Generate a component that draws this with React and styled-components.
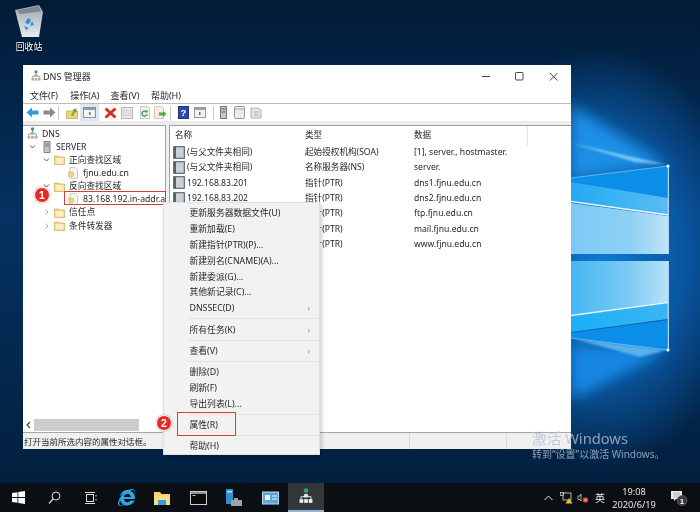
import React from "react";
import styled, { createGlobalStyle } from "styled-components";
import { FaInternetExplorer } from "react-icons/fa";

const Global = createGlobalStyle`
  html, body { margin: 0; padding: 0; width: 700px; height: 512px; overflow: hidden; background: #03203f; }
  * { box-sizing: border-box; }
`;

const Screen = styled.div`
  width: 700px; height: 512px; display: flex; flex-direction: column;
  font-family: "Noto Sans", "Noto Sans CJK SC", sans-serif; font-size: 8.8px; color: #262626;
  filter: blur(0.25px);
`;
const Desktop = styled.div`position: relative; height: 483px; overflow: hidden;`;
const Wall = styled.svg`position: absolute; inset: 0;`;

const DesktopIcon = styled.div`
  position: absolute; left: 8px; top: 5px; width: 42px; display: flex; flex-direction: column; align-items: center;
  gap: 4px; color: #fff; line-height: 12px; text-shadow: 0 1px 2px #000;
`;

const Win = styled.div`
  position: absolute; left: 23px; top: 65px; width: 548px; height: 384px; background: #fff;
  display: flex; flex-direction: column;
`;
const TitleBar = styled.div`display: flex; align-items: center; height: 22px; padding: 0 1px 0 8px; flex: none;`;
const TitleText = styled.div`flex: 1; margin-left: 2px; font-size: 9px;`;
const Ctl = styled.div`width: 34px; display: flex; justify-content: center; align-items: center;`;
const MenuBar = styled.div`display: flex; height: 16px; padding-left: 7px; align-items: center; flex: none;`;
const MenuItem = styled.div`width: 40.3px; font-size: 9px; white-space: nowrap;`;
const Rule = styled.div`height: 1px; background: #bdbdbd; flex: none;`;
const Toolbar = styled.div`display: flex; align-items: center; height: 17px; padding-left: 2px; flex: none;`;
const Tool = styled.div`
  width: ${p => p.$w || 15}px; margin-left: ${p => p.$ml || 0}px; height: 17px; display: flex; align-items: center; justify-content: center; flex: none;
  background: ${p => p.$on ? "#d9e9f5" : "transparent"};
`;
const ToolSep = styled.div`width: 1px; height: 14px; background: #c8c8c8; margin: 0 ${p => p.$m || 5}px; flex: none;`;
const Strip = styled.div`height: 4px; background: #ececec; flex: none;`;
const Panes = styled.div`flex: 1; display: flex; min-height: 0; background: #f0f0f0;`;
const TreePane = styled.div`
  width: 143px; flex: none; background: #fff; border-top: 1px solid #a0a0a0; border-right: 1px solid #a0a0a0;
  display: flex; flex-direction: column; overflow: hidden;
`;
const Tree = styled.div`flex: 1; min-height: 0; padding-top: 1px; display: grid; grid-auto-rows: 13.15px; align-content: start;`;
const TreeRow = styled.div`
  display: flex; align-items: center; white-space: nowrap; padding-left: ${p => p.$in}px; line-height: 12px; min-width: 0;
  svg { flex: none; }
`;
const Twist = styled.span`width: 9px; display: flex; justify-content: center; flex: none; margin-right: 3px;`;
const NodeLabel = styled.span`margin-left: 4px; font-size: 8.7px;`;
const HScroll = styled.div`height: 13px; display: flex; align-items: center; margin-bottom: 1px; flex: none; padding-left: 3px; gap: 3px;`;
const Thumb = styled.div`width: 105px; height: 12px; background: #cdcdcd;`;
const ListPane = styled.div`
  flex: 1; margin-left: 3px; background: #fff; border-top: 1px solid #a0a0a0; border-left: 1px solid #a0a0a0; padding-left: 3px; position: relative;
  font-size: 8.6px;
`;
const Grid = styled.div`display: grid; grid-template-columns: 132px 109px 1fr; grid-auto-rows: 15.3px; align-items: center; white-space: nowrap; line-height: 12px;`;
const Head = styled.div`height: 18.5px; display: grid; grid-template-columns: 130px 109px 1fr; align-items: center; padding-left: 2px; line-height: 12px;`;
const HeadEdge = styled.div`position: absolute; left: 357px; top: 0; width: 1px; height: 20px; background: #e6e6e6;`;
const NameCell = styled.div`display: flex; align-items: center; gap: 2px;`;
const Status = styled.div`
  height: 17px; flex: none; border-top: 1px solid #a6a6a6; background: #f0f0f0; display: grid; grid-template-columns: 387px 97px 1fr; align-items: center;
  font-size: 8.5px;
`;
const StatusCell = styled.div`height: 100%; display: flex; align-items: center; padding-left: 1px; border-right: 1px solid #dcdcdc; white-space: nowrap;`;

const Ctx = styled.div`
  position: absolute; left: 163px; top: 202px; width: 157px; height: 253px; background: #f2f2f2; padding: 2px 0 0 25.5px;
  border: 1px solid #e0e0e0; box-shadow: 2px 2px 4px rgba(0,0,0,.18); display: flex; flex-direction: column;
`;
const CtxItem = styled.div`
  height: 15.9px; display: flex; align-items: center; justify-content: space-between; padding-right: 9px; flex: none;
  white-space: nowrap; line-height: 12px;
`;
const CtxSep = styled.div`height: 1px; background: #e4e4e4; margin: 2.2px 0 2.2px -2px; flex: none;`;
const Chevron = styled.span`color: #8a8a8a; font-size: 8px; line-height: 1;`;

const RedBox = styled.div`position: absolute; border: 1.5px solid #d2403a; left: ${p => p.$x}px; top: ${p => p.$y}px; width: ${p => p.$w}px; height: ${p => p.$h}px;`;
const Badge = styled.div`
  position: absolute; left: ${p => p.$x - 8}px; top: ${p => p.$y - 8}px; width: 16px; height: 16px; border-radius: 50%;
  background: #e8291f; border: 1px solid #fff; color: #fff; font: bold 10.5px "Liberation Sans", sans-serif;
  display: flex; align-items: center; justify-content: center; box-shadow: 0 0 2px rgba(0,0,0,.4);
`;
const Watermark = styled.div`position: absolute; left: 532px; top: 428px; color: rgba(178,192,206,.78); white-space: nowrap;`;
const WmTitle = styled.div`font-size: 14.7px; line-height: 20px;`;
const WmSub = styled.div`font-size: 10px; line-height: 13px;`;

const Taskbar = styled.div`height: 29px; background: #0b0e13; display: flex; align-items: stretch; flex: none; color: #e8e8e8;`;
const TaskBtn = styled.div`
  width: 36px; display: flex; align-items: center; justify-content: center; flex: none;
  background: ${p => p.$on ? "#343638" : "transparent"};
  border-bottom: ${p => p.$on ? "2px solid #8fb8d8" : "0"};
`;
const Spacer = styled.div`flex: 1;`;
const Tray = styled.div`display: flex; align-items: center;`;
const TrayBtn = styled.div`width: ${p => p.$w}px; display: flex; justify-content: center; align-items: center; font-size: ${p => p.$fs || 10}px;`;
const Clock = styled.div`width: 50px; text-align: center; font-size: 9.2px; line-height: 13px; white-space: nowrap;`;

const Folder = ({ s = 11 }) => (
  <svg width={s} height={s} viewBox="0 0 11 11"><path d="M.5 2h4l1 1h5v7.5H.5z" fill="#f3d27e" stroke="#c8a550" strokeWidth=".6"/><rect x="1.5" y="4" width="8" height="5.6" fill="#fbeec2"/></svg>
);
const ZoneDoc = () => (
  <svg width="11" height="12" viewBox="0 0 11 12"><path d="M2 .5h5l2.500 2.500v8.500H2z" fill="#f6f6f2" stroke="#b8b8b0" strokeWidth=".7"/><rect x=".5" y="5" width="5" height="4.500" fill="#f0d585" stroke="#c8a550" strokeWidth=".4"/></svg>
);
const Rec = () => (
  <svg width="12" height="13" viewBox="0 0 12 13"><rect x=".7" y=".7" width="10.6" height="11.6" fill="#c9d1d6" stroke="#4b4f52" strokeWidth="1"/><path d="M1 1h2v11H1z" fill="#596066"/></svg>
);
const Tw = ({ d }) => (
  <Twist><svg width="7" height="6" viewBox="0 0 7 6">{d === "o" ? <path d="M1 1.500l2.500 2.500L6 1.500" fill="none" stroke="#555" strokeWidth="1"/> : <path d="M2.500 .5L5 3 2.500 5.500" fill="none" stroke="#aaa" strokeWidth="1"/>}</svg></Twist>
);
const DnsIcon = ({ s = 11, light }) => (
  <svg width={s} height={s * 1.15} viewBox="0 0 11 13">
    <circle cx="5.5" cy="2" r="1.8" fill="#2e9e8f"/>
    <rect x="5" y="3.5" width="1" height="3" fill="#777"/>
    <path d="M1.500 9V7h8v2" fill="none" stroke={light ? "#ddd" : "#888"} strokeWidth=".8"/>
    <rect x="3.8" y="5" width="3.4" height="2.6" fill={light ? "#e8e8e8" : "#a8a8a0"}/>
    <rect x=".3" y="9" width="3" height="3" fill={light ? "#f0f0f0" : "#b8b4a4"}/><rect x="4" y="9" width="3" height="3" fill={light ? "#f0f0f0" : "#b8b4a4"}/><rect x="7.7" y="9" width="3" height="3" fill={light ? "#f0f0f0" : "#b8b4a4"}/>
  </svg>
);

const tree = [
  { in: 4, icon: <DnsIcon />, t: "DNS" },
  { in: 5, tw: "o", icon: <svg width="12" height="12" viewBox="0 0 12 12"><rect x="4" y=".5" width="6" height="11" fill="#c4c4c4" stroke="#6e6e6e" strokeWidth=".8"/><path d="M5 3h4M5 5h4" stroke="#555" strokeWidth=".7"/></svg>, t: "SERVER" },
  { in: 19, tw: "o", icon: <Folder />, t: "正向查找区域" },
  { in: 45, icon: <ZoneDoc />, t: "fjnu.edu.cn" },
  { in: 19, tw: "o", icon: <Folder />, t: "反向查找区域" },
  { in: 45, icon: <ZoneDoc />, t: "83.168.192.in-addr.arpa" },
  { in: 19, tw: "c", icon: <Folder />, t: "信任点" },
  { in: 19, tw: "c", icon: <Folder />, t: "条件转发器" },
];

const rows = [
  ["(与父文件夹相同)", "起始授权机构(SOA)", "[1], server., hostmaster."],
  ["(与父文件夹相同)", "名称服务器(NS)", "server."],
  ["192.168.83.201", "指针(PTR)", "dns1.fjnu.edu.cn"],
  ["192.168.83.202", "指针(PTR)", "dns2.fjnu.edu.cn"],
  ["192.168.83.203", "指针(PTR)", "ftp.fjnu.edu.cn"],
  ["192.168.83.204", "指针(PTR)", "mail.fjnu.edu.cn"],
  ["192.168.83.205", "指针(PTR)", "www.fjnu.edu.cn"],
];

const Wallpaper = () => (
  <Wall width="700" height="483" viewBox="0 0 700 483">
    <defs>
      <linearGradient id="base" x1="0" x2="0" y1="0" y2="1"><stop offset="0" stopColor="#021b36"/><stop offset=".45" stopColor="#053262"/><stop offset="1" stopColor="#03203f"/></linearGradient>
      <radialGradient id="glow" gradientUnits="userSpaceOnUse" cx="600" cy="258" r="1" gradientTransform="translate(600 258) scale(150 210) translate(-600 -258)">
        <stop offset="0" stopColor="#0d78d2"/><stop offset=".55" stopColor="#0a57a2"/><stop offset="1" stopColor="#0a57a2" stopOpacity="0"/>
      </radialGradient>
      <linearGradient id="pale1" x1="0" x2="1" y1="0" y2="0"><stop offset="0" stopColor="#7cc9f4"/><stop offset=".6" stopColor="#8fd0f5"/><stop offset="1" stopColor="#bde3f8"/></linearGradient>
      <linearGradient id="pale2" x1="0" x2="1" y1="0" y2="0"><stop offset="0" stopColor="#45b6f2"/><stop offset=".6" stopColor="#7ccaf4"/><stop offset="1" stopColor="#b8e2f8"/></linearGradient>
      <linearGradient id="mid" x1="0" x2="1" y1="0" y2="0"><stop offset="0" stopColor="#22aaf2"/><stop offset="1" stopColor="#59bdf2"/></linearGradient>
      <linearGradient id="mid2" x1="0" x2="1" y1="0" y2="0"><stop offset="0" stopColor="#18b0f6"/><stop offset="1" stopColor="#3cb6f2"/></linearGradient>
      <filter id="b"><feGaussianBlur stdDeviation="7"/></filter>
      <filter id="b2"><feGaussianBlur stdDeviation="1.2"/></filter>
    </defs>
    <rect width="700" height="483" fill="url(#base)"/>
    <rect width="700" height="483" fill="url(#glow)"/>
    <path d="M571 105L668 165L571 178Z" fill="#1b8fe6" filter="url(#b)"/>
    <path d="M571 345L668 350L571 400Z" fill="#1488e4" filter="url(#b)"/>
    <path d="M571 143L668 165L635 162Z" fill="#9adcff" opacity=".75" filter="url(#b2)"/>
    <path d="M571 338L668 350L640 357Z" fill="#7fd0ff" opacity=".65" filter="url(#b2)"/>
    <path d="M571 178L668 166V199L571 182Z" fill="#0a8ee8"/>
    <path d="M571 182L668 198V215L571 201Z" fill="url(#mid)"/>
    <path d="M571 203L668 216V254H571Z" fill="url(#pale1)"/>
    <path d="M571 261H668V302L571 315Z" fill="url(#pale2)"/>
    <path d="M571 316L668 303V319L571 332Z" fill="url(#mid2)"/>
    <path d="M571 333L668 320V350L571 338Z" fill="#0a8ee8"/>
    <path d="M571 201.500L668 215M571 315.500L668 302.500" stroke="#eef9ff" strokeWidth="1.400"/>
    <path d="M571 178L668 166M571 338L668 350" stroke="#6cc6fa" strokeWidth=".8"/>
    <path d="M668.300 166V254M668.300 261V350" stroke="#d8f2ff" strokeWidth="1"/>
    <circle cx="668" cy="166" r="1.600" fill="#fff"/>
    <circle cx="668" cy="350" r="1.600" fill="#fff"/>
  </Wall>
);

export default function App() {
  return (
    <Screen>
      <Global />
      <Desktop>
        <Wallpaper />
        <DesktopIcon>
          <svg width="28" height="32" viewBox="0 0 28 32">
            <defs><linearGradient id="bin" x1="0" x2="0" y1="0" y2="1"><stop offset="0" stopColor="#9ea9af"/><stop offset="1" stopColor="#e6ecef"/></linearGradient></defs>
            <path d="M0 5L24 0l4 7-4 25H7z" fill="url(#bin)"/>
            <path d="M2 5.500L23.500 1.200 26 6.500 5 9z" fill="#7d888e"/>
            <path d="M10 18l3-5 3 2-2 4zm7-2l2 4-4 1zM9 21l5 2-3 2z" fill="#2d8fdc"/>
          </svg>
          <div>回收站</div>
        </DesktopIcon>

        <Win>
          <TitleBar>
            <DnsIcon s={10} />
            <TitleText>DNS 管理器</TitleText>
            <Ctl><svg width="9" height="9"><path d="M1 4.500h8" stroke="#444" strokeWidth="1"/></svg></Ctl>
            <Ctl><svg width="9" height="9"><rect x=".5" y=".5" width="7.500" height="7.500" rx=".8" fill="none" stroke="#444"/></svg></Ctl>
            <Ctl><svg width="9" height="9"><path d="M1 1l7.500 7.500M8.500 1L1 8.500" stroke="#444"/></svg></Ctl>
          </TitleBar>
          <MenuBar>
            {["文件(F)", "操作(A)", "查看(V)", "帮助(H)"].map(m => <MenuItem key={m}>{m}</MenuItem>)}
          </MenuBar>
          <Rule />
          <Toolbar>
            <Tool $w={14}><svg width="13" height="11" viewBox="0 0 13 11"><path d="M6 .5L.5 5.500 6 10.500V7.500h6.500v-4H6z" fill="#2f9bdc"/></svg></Tool>
            <Tool $w={14} $ml={3}><svg width="13" height="11" viewBox="0 0 13 11"><path d="M7 .5l5.500 5L7 10.500v-3H.5v-4H7z" fill="#8a8a8a"/></svg></Tool>
            <ToolSep $m={2} />
            <Tool $ml={3}><svg width="12" height="12" viewBox="0 0 12 12"><path d="M.5 4h11v7.500H.5z" fill="#ecd27a" stroke="#b79a45" strokeWidth=".6"/><path d="M5 8l3-4-2-.5 4-2.500.8 4.500L9 5 6.500 9z" fill="#5aa72e"/></svg></Tool>
            <Tool $on $w={19} $ml={1}><svg width="13" height="11" viewBox="0 0 13 11"><rect x=".5" y=".5" width="12" height="10" fill="#f4f4f0" stroke="#8f8f8f"/><rect x="1" y="1" width="11" height="2" fill="#9a9a9a"/><path d="M6 5h1.500v3H6z" fill="#4a8a3a"/></svg></Tool>
            <Tool $ml={4}><svg width="13" height="12" viewBox="0 0 13 12"><path d="M1.500 1.500l10 9M11.500 1.500l-10 9" stroke="#dd2a20" strokeWidth="3"/></svg></Tool>
            <Tool $ml={1}><svg width="12" height="12" viewBox="0 0 12 12"><rect x=".5" y=".5" width="11" height="11" fill="#ededed" stroke="#b5b5b5"/><rect x="2" y="3" width="8" height="6" fill="#dedede" stroke="#c4c4c4" strokeWidth=".5"/></svg></Tool>
            <Tool $ml={3}><svg width="12" height="13" viewBox="0 0 12 13"><path d="M1.500.5h7l2 2v10h-9z" fill="#eef2ee" stroke="#b5b5b5" strokeWidth=".7"/><path d="M8 8a2.500 2.500 0 1 1-.8-2.200M8 4v2H6" fill="none" stroke="#2f9a3c" strokeWidth="1.200"/></svg></Tool>
            <Tool $ml={1}><svg width="13" height="13" viewBox="0 0 13 13"><path d="M.5.5h7l2 2v10h-9z" fill="#f3efd8" stroke="#b8b8a0" strokeWidth=".7"/><path d="M5 6.500h4V5l3.500 3L9 11V9.500H5z" fill="#4cae3c"/></svg></Tool>
            <ToolSep $m={2} />
            <Tool $ml={3} $w={14}><svg width="11" height="13" viewBox="0 0 11 13"><rect x=".5" y=".5" width="10" height="12" fill="#2f47a8" stroke="#24327a"/><text x="5.500" y="10" textAnchor="middle" fontSize="9.500" fontWeight="700" fill="#fff" fontFamily="Liberation Sans">?</text></svg></Tool>
            <Tool $ml={2}><svg width="12" height="11" viewBox="0 0 12 11"><rect x=".5" y=".5" width="11" height="10" fill="#f2f2ee" stroke="#9a9a9a"/><rect x="1" y="1" width="10" height="2" fill="#a0a0a0"/><path d="M5 5h1.500v3H5z" fill="#4a8a3a"/></svg></Tool>
            <ToolSep $m={6} />
            <Tool $w={7}><svg width="7" height="13" viewBox="0 0 7 13"><rect x=".5" y=".5" width="6" height="12" fill="#c8c8c8" stroke="#777"/><path d="M1.500 3h4M1.500 6h4" stroke="#555"/></svg></Tool>
            <Tool $ml={5}><svg width="11" height="13" viewBox="0 0 11 13"><rect x=".5" y=".5" width="10" height="12" rx="1" fill="#e8ecec" stroke="#8f9a9a"/><path d="M1 3h9" stroke="#a0aaaa"/></svg></Tool>
            <Tool $ml={1}><svg width="12" height="13" viewBox="0 0 12 13"><path d="M1 2h7l3 2v8H1z" fill="#e6e6e6" stroke="#b0b0b0"/><path d="M4 6h5M4 9h5" stroke="#aaa"/></svg></Tool>
          </Toolbar>
          <Strip />
          <Panes>
            <TreePane>
              <Tree>
                {tree.map(r => (
                  <TreeRow key={r.t + r.in} $in={r.in}>
                    {r.tw && <Tw d={r.tw} />}
                    {r.icon}
                    <NodeLabel>{r.t}</NodeLabel>
                  </TreeRow>
                ))}
              </Tree>
              <HScroll>
                <svg width="5" height="8" viewBox="0 0 5 8"><path d="M4 1L1 4l3 3" fill="none" stroke="#444" strokeWidth="1.200"/></svg>
                <Thumb />
              </HScroll>
            </TreePane>
            <ListPane>
              <HeadEdge />
              <Head>
                <div>名称</div><div>类型</div><div>数据</div>
              </Head>
              <Grid>
                {rows.map(r => (
                  <React.Fragment key={r[0] + r[1] + r[2]}>
                    <NameCell><Rec /><span>{r[0]}</span></NameCell>
                    <div>{r[1]}</div>
                    <div>{r[2]}</div>
                  </React.Fragment>
                ))}
              </Grid>
            </ListPane>
          </Panes>
          <Status>
            <StatusCell>打开当前所选内容的属性对话框。</StatusCell>
            <StatusCell />
            <div />
          </Status>
        </Win>

        <RedBox $x={64} $y={191} $w={102} $h={14} />
        <Badge $x={42} $y={195}>1</Badge>

        <Watermark>
          <WmTitle>激活 Windows</WmTitle>
          <WmSub>转到“设置”以激活 Windows。</WmSub>
        </Watermark>

        <Ctx>
          {["更新服务器数据文件(U)", "重新加载(E)", "新建指针(PTR)(P)...", "新建别名(CNAME)(A)...", "新建委派(G)...", "其他新记录(C)..."].map(t => (
            <CtxItem key={t}><span>{t}</span></CtxItem>
          ))}
          <CtxItem><span>DNSSEC(D)</span><Chevron>›</Chevron></CtxItem>
          <CtxSep />
          <CtxItem><span>所有任务(K)</span><Chevron>›</Chevron></CtxItem>
          <CtxSep />
          <CtxItem><span>查看(V)</span><Chevron>›</Chevron></CtxItem>
          <CtxSep />
          <CtxItem><span>删除(D)</span></CtxItem>
          <CtxItem><span>刷新(F)</span></CtxItem>
          <CtxItem><span>导出列表(L)...</span></CtxItem>
          <CtxSep />
          <CtxItem><span>属性(R)</span></CtxItem>
          <CtxSep />
          <CtxItem><span>帮助(H)</span></CtxItem>
        </Ctx>
        <RedBox $x={177} $y={412} $w={59} $h={24} />
        <Badge $x={164} $y={423}>2</Badge>
      </Desktop>

      <Taskbar>
        <TaskBtn>
          <svg width="13" height="13" viewBox="0 0 13 13"><path d="M0 2l5.500-.8V6H0zM6.300 1.100L13 0v6H6.300zM0 7h5.500v4.800L0 11zM6.300 7H13v6l-6.700-1z" fill="#fff"/></svg>
        </TaskBtn>
        <TaskBtn>
          <svg width="13" height="13" viewBox="0 0 13 13"><circle cx="8" cy="5" r="4" fill="none" stroke="#ddd" strokeWidth="1"/><path d="M5 8l-4 4.500" stroke="#ddd" strokeWidth="1.200"/></svg>
        </TaskBtn>
        <TaskBtn>
          <svg width="13" height="12" viewBox="0 0 13 12"><rect x="2.500" y="2.500" width="7" height="7" fill="none" stroke="#ddd"/><path d="M1 .5h10M1 11.500h10M12 3v1.500M12 7v1.500" stroke="#ddd"/></svg>
        </TaskBtn>
        <TaskBtn>
          <FaInternetExplorer size={17} color="#2ea6ea" />
        </TaskBtn>
        <TaskBtn>
          <svg width="16" height="14" viewBox="0 0 16 14"><path d="M0 1h6l1.500 2H16v11H0z" fill="#f5d36e"/><rect x="0" y="5" width="16" height="9" fill="#f9dd85"/><rect x="4" y="9" width="8" height="5" fill="#3c9ad8"/></svg>
        </TaskBtn>
        <TaskBtn>
          <svg width="17" height="14" viewBox="0 0 17 14"><rect x=".5" y=".5" width="16" height="13" fill="#0a0a0a" stroke="#cfcfcf"/><path d="M1 2h15" stroke="#bbb" strokeWidth="1.500"/><path d="M2.500 4.500h3" stroke="#bbb"/></svg>
        </TaskBtn>
        <TaskBtn>
          <svg width="18" height="18" viewBox="0 0 18 18"><rect x="1" y="0" width="7" height="15" fill="#2f8fd0"/><rect x="2" y="2" width="5" height="1.500" fill="#bfe2f7"/><path d="M6 11h3v-2h4v2h4v6H6z" fill="#9aa4aa"/></svg>
        </TaskBtn>
        <TaskBtn>
          <svg width="17" height="14" viewBox="0 0 17 14"><rect x=".5" y="1" width="16" height="12" fill="#5aa8d8" stroke="#bcdcee"/><rect x="3" y="4" width="5" height="5" fill="#e8f4fb"/><path d="M10 5h5M10 8h5" stroke="#e8f4fb"/></svg>
        </TaskBtn>
        <TaskBtn $on>
          <DnsIcon s={14} light />
        </TaskBtn>
        <Spacer />
        <Tray>
          <TrayBtn $w={18}><svg width="9" height="6" viewBox="0 0 9 6"><path d="M.5 5L4.500 1l4 4" fill="none" stroke="#ddd"/></svg></TrayBtn>
          <TrayBtn $w={18}>
            <svg width="13" height="12" viewBox="0 0 13 12"><rect x=".5" y=".5" width="3" height="3" fill="none" stroke="#ddd" strokeWidth=".7"/><rect x="3" y="1" width="8" height="7" fill="none" stroke="#ddd" strokeWidth=".8"/><path d="M9 6l3.500 5.500h-7z" fill="#f0c020"/></svg>
          </TrayBtn>
          <TrayBtn $w={16}>
            <svg width="12" height="10" viewBox="0 0 12 10"><path d="M1 3h2l1-2v7L3 6.500H1z" fill="none" stroke="#ddd" strokeWidth=".7"/><circle cx="8.500" cy="7" r="2.800" fill="#d8342c"/><path d="M7.300 5.800l2.400 2.400M9.700 5.800L7.300 8.200" stroke="#fff" strokeWidth=".7"/></svg>
          </TrayBtn>
          <TrayBtn $w={18} $fs={10}>英</TrayBtn>
          <Clock>19:08<br />2020/6/19</Clock>
          <TrayBtn $w={41}>
            <svg width="19" height="16" viewBox="0 0 19 16"><path d="M1 1h11v8H6L4 11V9H1z" fill="#eee"/><path d="M3 3h7M3 5h7M3 7h5" stroke="#888" strokeWidth=".6"/><circle cx="12" cy="10.500" r="5" fill="#3b3b3b" stroke="#777" strokeWidth=".6"/><text x="12" y="13.500" textAnchor="middle" fontSize="8" fontWeight="700" fill="#fff" fontFamily="Liberation Sans">1</text></svg>
          </TrayBtn>
        </Tray>
      </Taskbar>
    </Screen>
  );
}
